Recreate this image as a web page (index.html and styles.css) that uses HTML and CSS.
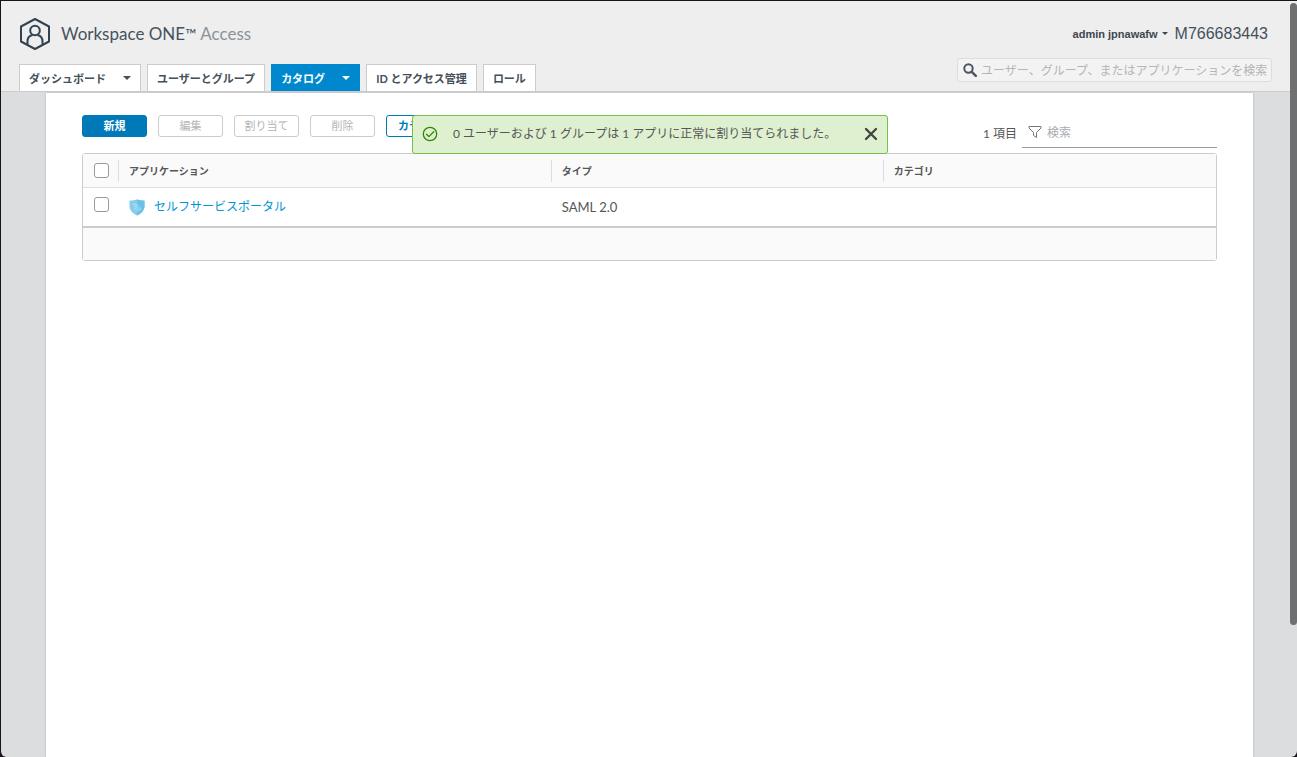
FILE: index.html
```html
<!DOCTYPE html>
<html lang="ja">
<head>
<meta charset="utf-8">
<title>Workspace ONE Access</title>
<link rel="stylesheet" href="styles.css">
</head>
<body>
<div class="window">
  <header class="header">
    <div class="brand-bar">
      <div class="brand">
        <svg class="brand-logo" viewBox="0 0 32 34" fill="none" stroke="#314351" stroke-width="2" stroke-linejoin="round"><path d="M16 2 30 9.500V24.500L16 32 2 24.500V9.500Z"/><circle cx="16" cy="13.500" r="4.800"/><path d="M8.500 27.500V24.500Q8.500 19 13.500 18M23.500 27.500V24.500Q23.500 19 18.500 18"/></svg>
        <span class="brand-name">Workspace ONE<span class="tm">™</span> <span class="brand-sub">Access</span></span>
      </div>
      <div class="account">
        <button class="user" type="button">admin jpnawafw<span class="caret caret-small"></span></button>
        <span class="tenant">M766683443</span>
      </div>
    </div>
    <div class="nav-bar">
      <nav class="tabs">
        <button class="tab tab-menu" type="button">ダッシュボード<span class="caret"></span></button>
        <button class="tab" type="button">ユーザーとグループ</button>
        <button class="tab tab-menu tab-active" type="button">カタログ<span class="caret"></span></button>
        <button class="tab" type="button">ID とアクセス管理</button>
        <button class="tab" type="button">ロール</button>
      </nav>
      <label class="global-search">
        <svg class="search-icon" viewBox="0 0 14 14" fill="none" stroke="#4b5560"><circle cx="5.500" cy="5.500" r="4.200" stroke-width="2"/><path d="m8.800 8.800 4 4" stroke-width="2.400" stroke-linecap="round"/></svg>
        <input class="search-input" type="text" aria-label="全体検索" placeholder="ユーザー、グループ、またはアプリケーションを検索">
      </label>
    </div>
  </header>

  <main class="panel">
    <div class="toolbar">
      <div class="actions">
        <button class="btn btn-primary" type="button">新規</button>
        <button class="btn" type="button" disabled>編集</button>
        <button class="btn" type="button" disabled>割り当て</button>
        <button class="btn" type="button" disabled>削除</button>
        <button class="btn btn-outline" type="button">カテゴリ</button>
      </div>
      <div class="filter">
        <span class="count">1 項目</span>
        <label class="filter-box">
          <svg class="filter-icon" viewBox="0 0 14 14" fill="none" stroke="#777" stroke-linejoin="round"><path d="M1 1.500H13V3L8.500 7.500V12.500L5.500 10.500V7.500L1 3Z"/></svg>
          <input class="filter-input" type="text" aria-label="項目の検索" placeholder="検索">
        </label>
      </div>
    </div>

    <table class="grid">
      <colgroup><col class="col-check"><col class="col-app"><col class="col-type"><col class="col-category"></colgroup>
      <thead>
        <tr>
          <th class="check"><input class="box" type="checkbox" aria-label="すべて選択"></th>
          <th><div class="head-cell">アプリケーション</div></th>
          <th><div class="head-cell">タイプ</div></th>
          <th><div class="head-cell">カテゴリ</div></th>
        </tr>
      </thead>
      <tbody>
        <tr>
          <td class="check"><input class="box" type="checkbox" aria-label="セルフサービスポータルを選択"></td>
          <td>
            <div class="app">
              <svg class="shield" viewBox="0 0 16 17"><path d="M.500 1.800Q5 1.500 8 .500Q11 1.500 15.500 1.800V8Q15 13 8 16.500Q1 13 .500 8Z" fill="#84cdec"/><path d="M8 .500Q11 1.500 15.500 1.800V8Q15 13 8 16.500Z" fill="#6bc0e6"/><path d="M4 5Q10 5 12 11M5 7Q9 7.500 10.500 12M5.500 9.500Q8 10 9 12.500" fill="none" stroke="#c4e8f7" stroke-width=".8"/></svg>
              <a class="app-link" href="#">セルフサービスポータル</a>
            </div>
          </td>
          <td class="type">SAML 2.0</td>
          <td></td>
        </tr>
      </tbody>
      <tfoot><tr><td colspan="4"></td></tr></tfoot>
    </table>

    <div class="alert" role="status">
      <svg class="alert-icon" viewBox="0 0 16 16" fill="none" stroke="#318700" stroke-width="1.300" stroke-linecap="round" stroke-linejoin="round"><circle cx="8" cy="8" r="6.700"/><path d="m4.500 8.200 2.400 2.400 4.800-4.800"/></svg>
      <span class="alert-text">0 ユーザーおよび 1 グループは 1 アプリに正常に割り当てられました。</span>
      <button class="alert-close" type="button" aria-label="閉じる"><svg class="close-icon" viewBox="0 0 14 14" stroke="#454545" stroke-width="2.400" stroke-linecap="round"><path d="m2 2 10 10M12 2 2 12"/></svg></button>
    </div>
  </main>
  <div class="scroll-thumb"></div>
</div>
</body>
</html>
```
FILE: styles.css
```css
* { box-sizing: border-box; }

body {
  margin: 0;
  background: #16141a;
  color: #565656;
  font-family: Lato, "Noto Sans CJK JP", sans-serif;
  font-size: 12px;
}

button, input { font: inherit; margin: 0; }
button { cursor: pointer; }
svg { display: block; flex: none; }

.window {
  position: relative;
  display: flex;
  flex-direction: column;
  min-height: 100vh;
  border-top: 1px solid #16141a;
  border-left: 1px solid #16141a;
  border-radius: 0 0 6px 6px;
  background: #dcdddf;
}

/* Header */
.header {
  display: flex;
  flex-direction: column;
  background: #eee;
  border-bottom: 1px solid #ccc;
}

.brand-bar {
  display: flex;
  justify-content: space-between;
  align-items: center;
  height: 57px;
  padding: 8px 29px 0 18px;
}

.brand { display: flex; align-items: center; gap: 10px; }
.brand-logo { width: 32px; height: 34px; }

.brand-name {
  color: #45535e;
  font-family: Lato, sans-serif;
  font-size: 17px;
  line-height: 24px;
}

.tm { font-size: 15px; }
.brand-sub { color: #8b9298; }

.account {
  display: flex;
  align-items: center;
  gap: 7px;
  color: #45505a;
  font-family: "Liberation Sans", sans-serif;
}

.user {
  display: flex;
  align-items: center;
  gap: 4px;
  padding: 0;
  border: 0;
  background: none;
  color: #3d474f;
  font-size: 11px;
  font-weight: bold;
}

.tenant { font-size: 16px; }

.caret {
  border: 4px solid transparent;
  border-top-color: currentColor;
  border-bottom: 0;
}

.caret-small { border-width: 3px; border-bottom: 0; }

.nav-bar {
  display: flex;
  justify-content: space-between;
  align-items: flex-end;
  padding: 0 25px 0 18px;
}

.tabs { display: flex; gap: 6px; padding-top: 6px; }

.tab {
  display: flex;
  align-items: center;
  height: 27px;
  padding: 0 9px;
  border: 1px solid #ccc;
  border-bottom: 0;
  background: #fff;
  color: #454f57;
  font-size: 11px;
  font-weight: bold;
}

.tab-menu { gap: 17px; }
.tab-active { background: #0088cf; border-color: #0088cf; color: #fff; }

.global-search {
  display: flex;
  align-items: center;
  gap: 4px;
  width: 315px;
  height: 24px;
  margin-bottom: 9px;
  padding-left: 5px;
  border: 1px solid #ddd;
  border-radius: 3px;
  background: #f3f3f3;
}

.search-icon { width: 14px; height: 14px; }

.search-input, .filter-input {
  flex: 1;
  min-width: 0;
  padding: 0;
  border: 0;
  outline: 0;
  background: none;
  color: #565656;
}

.search-input::placeholder { color: #b5b5b5; }
.filter-input::placeholder { color: #a9adb0; }

/* Content */
.panel {
  position: relative;
  flex: 1;
  margin: 1px 44px 0 45px;
  padding: 22px 36px;
  background: #fff;
  box-shadow: 0 0 2px #aaa;
}

.toolbar {
  display: flex;
  justify-content: space-between;
  align-items: flex-start;
  height: 38px;
}

.actions { display: flex; gap: 11px; }

.btn {
  min-width: 65px;
  height: 22px;
  padding: 0 9px;
  border: 1px solid #ccc;
  border-radius: 3px;
  background: #fff;
  color: #b5b5b5;
  font-size: 11px;
  line-height: 20px;
}

.btn-primary { background: #0079b8; border-color: #0079b8; color: #fff; font-weight: bold; }
.btn-outline { padding: 0 11px; border-color: #0079b8; color: #0079b8; font-weight: bold; }

.filter { display: flex; align-items: center; gap: 5px; padding-top: 2px; }

.filter-box {
  display: flex;
  align-items: center;
  gap: 5px;
  width: 195px;
  height: 31px;
  padding-left: 6px;
  border-bottom: 1px solid #9a9a9a;
}

.filter-icon { width: 14px; height: 14px; }

/* Application table */
.grid {
  width: 100%;
  table-layout: fixed;
  border: 1px solid #ccc;
  border-radius: 3px;
  border-spacing: 0;
}

.col-check { width: 35px; }
.col-app { width: 38.2%; }
.col-type { width: 29.3%; }

.grid th, .grid td { padding: 0; text-align: left; }
.grid th { height: 34px; background: #fafafa; border-bottom: 1px solid #ddd; font-size: 10px; font-weight: 600; }
.grid tbody td { height: 40px; border-bottom: 2px solid #ccc; }
.grid tfoot td { height: 32px; background: #fafafa; }
.grid .check { padding-left: 11px; }

.head-cell { padding-left: 10px; border-left: 1px solid #ddd; line-height: 22px; }

.box {
  display: block;
  width: 15px;
  height: 15px;
  appearance: none;
  border: 1px solid #9a9a9a;
  border-radius: 3px;
  background: #fff;
}

.grid tbody .box { margin-bottom: 6px; }

.app { display: flex; align-items: center; gap: 9px; padding-left: 11px; }
.shield { width: 16px; height: 17px; }
.app-link { padding-bottom: 3px; color: #0095d3; text-decoration: none; }
.grid .type { padding-left: 11px; font-size: 13px; }

/* Notification */
.alert {
  position: absolute;
  top: 22px;
  left: 366px;
  display: flex;
  align-items: center;
  width: 476px;
  height: 39px;
  padding: 0 9px 2px;
  border: 1px solid #74c143;
  border-radius: 3px;
  background: #dff0d0;
}

.alert-icon { width: 16px; height: 16px; }
.alert-text { flex: 1; margin-left: 15px; padding-bottom: 2px; white-space: nowrap; }
.alert-close { padding: 0; border: 0; background: none; }
.close-icon { width: 14px; height: 14px; }

.scroll-thumb {
  position: absolute;
  top: 2px;
  right: 0;
  width: 7px;
  height: 622px;
  border-radius: 4px;
  background: #6d6f71;
}
```
